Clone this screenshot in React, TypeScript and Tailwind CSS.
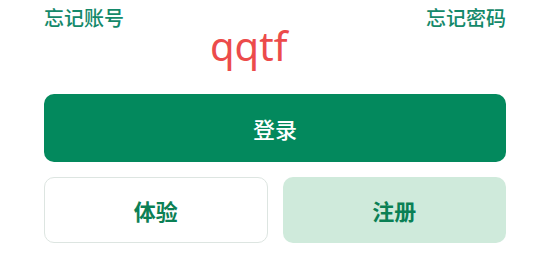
export default function App() {
  const cjk = { fontFamily: '"Noto Sans CJK SC", "Noto Sans", sans-serif' }
  return (
    <div className="w-[550px] h-[275px] bg-white px-[44px] flex flex-col" style={cjk}>
      {/* 顶部链接 */}
      <div className="flex justify-between items-center h-[24px] mt-[6px] text-[20px] font-medium text-[#14896a]">
        <span>忘记账号</span>
        <span>忘记密码</span>
      </div>

      {/* 验证码 */}
      <div
        className="h-[32px] leading-[32px] pl-[166px] text-[40px] text-[#ec4b4b]"
        style={{ fontFamily: '"Noto Sans", sans-serif' }}
      >
        qqtf
      </div>

      <button className="mt-[32px] h-[68px] w-full rounded-[10px] bg-[#03895d] text-white text-[22px] font-medium flex items-center justify-center">
        登录
      </button>

      <div className="mt-[15px] grid grid-cols-2 gap-[15px]">
        <button className="h-[66px] rounded-[10px] border border-[#dde5e1] bg-white text-[#0b8055] text-[22px] font-semibold flex items-center justify-center">
          体验
        </button>
        <button className="h-[66px] rounded-[10px] bg-[#cfeadb] text-[#0b8055] text-[22px] font-semibold flex items-center justify-center">
          注册
        </button>
      </div>
    </div>
  )
}
